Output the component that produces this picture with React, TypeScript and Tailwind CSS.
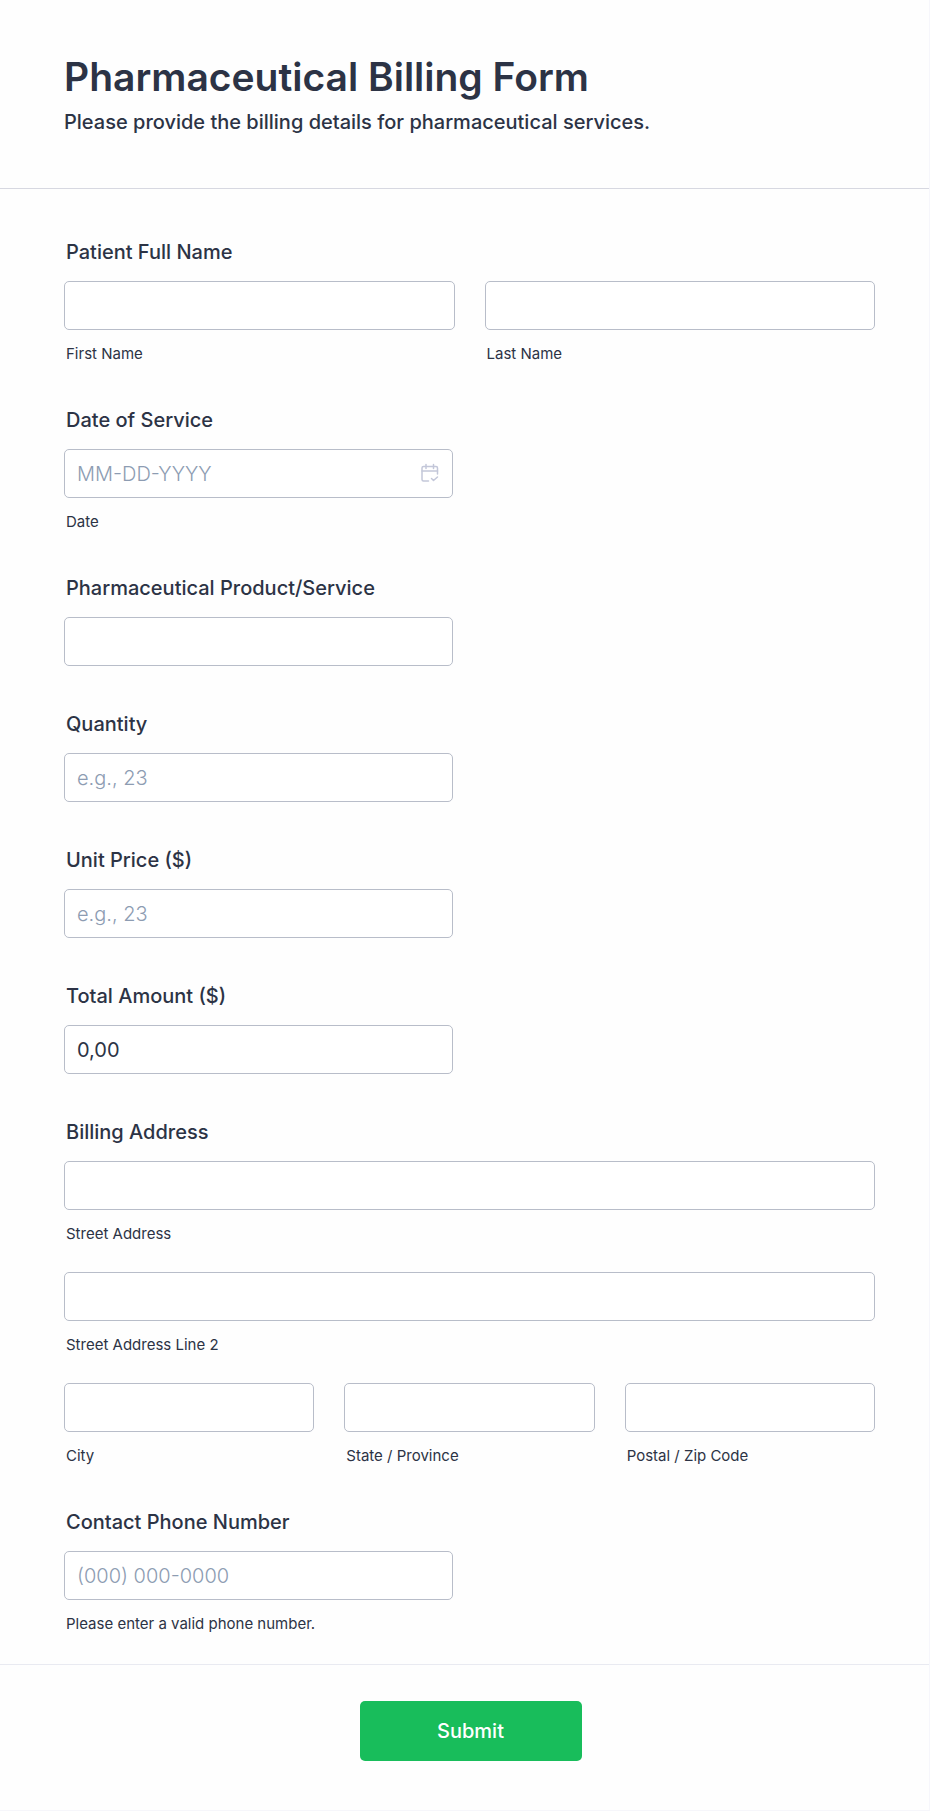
import { useState } from 'react';
import type { InputHTMLAttributes, ReactNode } from 'react';

type TextInputProps = InputHTMLAttributes<HTMLInputElement> & { id: string; sublabel?: string };

const CalendarIcon = () => (
  <svg viewBox="0 0 18 20" className="w-[18px] h-5 fill-none stroke-[#c3c7d9]" strokeWidth="1.5" strokeLinecap="round" strokeLinejoin="round">
    <path d="M16.500 11V5A1.500 1.500 0 0 0 15 3.500H2.500A1.500 1.500 0 0 0 1 5V16.500A1.500 1.500 0 0 0 2.500 18H7.500" />
    <path d="M1 8H16.500" />
    <path d="M5 1.500V5.500M12.500 1.500V5.500" />
    <path d="M10.500 15.500L12.500 17.500L16.500 14" />
  </svg>
);

function TextInput({ id, sublabel, ...rest }: TextInputProps) {
  return (
    <div>
      <input
        id={id}
        type="text"
        className="block w-full h-[49px] px-3 rounded-[5px] border border-[#b8bdc9] bg-white text-[20px] text-[#2c3345] placeholder:font-light placeholder:text-[#8d9cb2] placeholder:opacity-100 outline-none focus:border-blue-500"
        {...rest}
      />
      {sublabel && (
        <label htmlFor={id} className="block mt-4 pl-0.5 text-[15px] leading-4">{sublabel}</label>
      )}
    </div>
  );
}

function Field({ label, htmlFor, children }: { label: string; htmlFor: string; children: ReactNode }) {
  return (
    <div>
      <label htmlFor={htmlFor} className="block mb-[17px] pl-0.5 text-[20px] leading-6 font-medium">{label}</label>
      {children}
    </div>
  );
}

const Half = ({ children }: { children: ReactNode }) => <div className="relative w-[48%]">{children}</div>;

export default function App() {
  const [total, setTotal] = useState('0,00');

  return (
    <form
      onSubmit={(e) => e.preventDefault()}
      className="min-h-screen bg-[#fefefe] border-r border-b border-[#f6f6fb] text-[#2c3345] font-['Inter','Liberation_Sans',sans-serif]"
    >
      <header className="pl-16 pr-[54px] pt-[54px] pb-[54px] border-b border-[#d7d8e1]">
        <h1 className="text-[39px] leading-[46px] font-semibold">Pharmaceutical Billing Form</h1>
        <p className="mt-2.5 text-[20px] leading-6 font-medium">Please provide the billing details for pharmaceutical services.</p>
      </header>

      <div className="flex flex-col gap-[46px] pl-16 pr-[54px] pt-[51px] pb-8">
        <Field label="Patient Full Name" htmlFor="first-name">
          <div className="grid grid-cols-2 gap-[30px]">
            <TextInput id="first-name" sublabel="First Name" />
            <TextInput id="last-name" sublabel="Last Name" />
          </div>
        </Field>

        <Field label="Date of Service" htmlFor="date">
          <Half>
            <TextInput id="date" placeholder="MM-DD-YYYY" sublabel="Date" />
            <button type="button" aria-label="Choose date" className="absolute right-[14px] top-[14px]">
              <CalendarIcon />
            </button>
          </Half>
        </Field>

        <Field label="Pharmaceutical Product/Service" htmlFor="product">
          <Half><TextInput id="product" /></Half>
        </Field>

        <Field label="Quantity" htmlFor="quantity">
          <Half><TextInput id="quantity" placeholder="e.g., 23" /></Half>
        </Field>

        <Field label="Unit Price ($)" htmlFor="unit-price">
          <Half><TextInput id="unit-price" placeholder="e.g., 23" /></Half>
        </Field>

        <Field label="Total Amount ($)" htmlFor="total">
          <Half><TextInput id="total" value={total} onChange={(e) => setTotal(e.target.value)} /></Half>
        </Field>

        <Field label="Billing Address" htmlFor="street">
          <div className="flex flex-col gap-[30px]">
            <TextInput id="street" sublabel="Street Address" />
            <TextInput id="street2" sublabel="Street Address Line 2" />
            <div className="grid grid-cols-3 gap-[30px]">
              <TextInput id="city" sublabel="City" />
              <TextInput id="state" sublabel="State / Province" />
              <TextInput id="zip" sublabel="Postal / Zip Code" />
            </div>
          </div>
        </Field>

        <Field label="Contact Phone Number" htmlFor="phone">
          <Half><TextInput id="phone" type="tel" placeholder="(000) 000-0000" sublabel="Please enter a valid phone number." /></Half>
        </Field>
      </div>

      <footer className="flex justify-center pl-3 pt-9 pb-[49px] border-t border-[#e9eaf1]">
        <button type="submit" className="w-[222px] h-[60px] rounded-[5px] bg-[#18bd5b] hover:bg-[#16aa52] text-white text-[20px] font-medium">
          Submit
        </button>
      </footer>
    </form>
  );
}
